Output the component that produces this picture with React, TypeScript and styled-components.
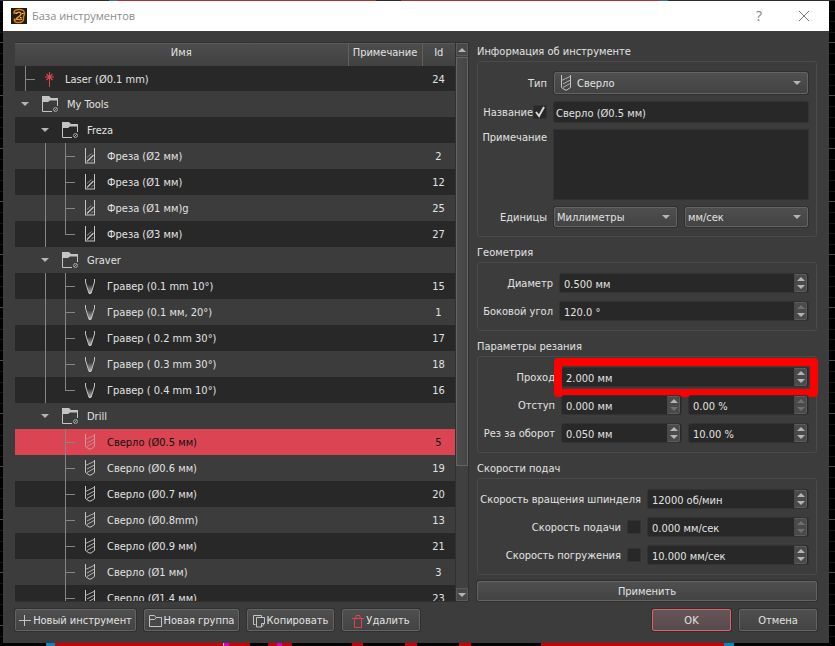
import React from "react";
import styled, { createGlobalStyle, css } from "styled-components";

const color = {
  panel: "#3c3c3c",
  dark: "#282828",
  edge: "#303030",
  text: "#e2e2e2",
  guide: "#858585",
  icon: "#c4c4c4",
  accent: "#db4453",
  rule: "#4a4a4a",
};

const GlobalStyle = createGlobalStyle`
  *, *::before, *::after { box-sizing: border-box; }
  body { margin: 0; background: #000; }
  body, button, input, select, textarea {
    font-family: "DejaVu Sans Condensed", "Noto Sans", sans-serif;
    font-size: 11px;
    line-height: 14px;
    color: ${color.text};
  }
  svg { display: block; flex: none; }
`;

/* ---------- workspace behind the dialog ---------- */

const Workspace = styled.div`
  display: flex;
  flex-direction: column;
  height: 100vh;
  background: repeating-linear-gradient(
      to bottom,
      #151515 0 1px, #000 1px 11px, #151515 11px 12px, #000 12px 21px,
      #151515 21px 22px, #000 22px 32px, #151515 32px 33px, #000 33px 42px,
      #484848 42px 43px, #000 43px 53px
    ) #000;
`;

const TopStrip = styled.div`
  flex: none;
  height: 1px;
  background: linear-gradient(
    to right,
    #2c2c2c 13%, #2f74a0 13% 14%, #a53439 14% 45%, #2c2c2c 45% 48%,
    #a53439 48% 79%, #2f74a0 79% 80%, #2c2c2c 80%
  );
`;

const BottomStrip = styled.div`
  flex: none;
  height: 3px;
  background: linear-gradient(
    to right,
    #000 46px, #0a84c8 46px 55px, #d00000 55px 223px, #d8b0d8 223px 224px,
    #d400d4 224px 229px, #d00000 229px 250px, #000 250px 268px, #d00000 268px 277px,
    #d400d4 277px 282px, #d00000 282px 292px, #000 292px 352px, #d00000 352px 363px,
    #000 363px 405px, #d00000 405px 417px, #000 417px 459px, #d00000 459px 471px,
    #000 471px 541px, #d00000 541px 724px, #0a84c8 724px 734px, #000 734px
  );
`;

const Dialog = styled.main`
  flex: 1;
  min-height: 0;
  margin: 0 6px 0 3px;
  display: flex;
  flex-direction: column;
  background: ${color.panel};
`;

const TitleBar = styled.header`
  flex: none;
  height: 30px;
  padding: 0 17px 0 8px;
  display: flex;
  align-items: center;
  gap: 5px;
  background: #fff;
`;

const Title = styled.h1`
  flex: 1;
  margin: 0;
  font: 400 11px/16px "Open Sans", sans-serif;
  color: #8c8c8c;
`;

const CaptionButton = styled.button`
  width: 16px;
  height: 20px;
  margin-left: 24px;
  padding: 0;
  border: 0;
  background: none;
  display: flex;
  align-items: center;
  justify-content: center;
  font: 400 14px/16px "Open Sans", sans-serif;
  color: #808080;
`;

const Content = styled.div`
  flex: 1;
  min-height: 0;
  padding: 11px 12px 12px;
  display: flex;
  flex-direction: column;
  gap: 7px;
`;

const Panes = styled.div`
  flex: 1;
  min-height: 0;
  display: grid;
  grid-template-columns: minmax(0, 462fr) minmax(0, 340fr);
  grid-template-rows: minmax(0, 1fr);
`;

/* ---------- tool tree ---------- */

const TreePane = styled.section`
  min-height: 0;
  display: flex;
  border: solid ${color.edge};
  border-width: 1px 0;
  margin-right: 8px;
  overflow: hidden;
`;

const TreeViewport = styled.div`
  flex: 1;
  min-width: 0;
  overflow: hidden;
`;

const TreeTable = styled.table`
  width: 100%;
  table-layout: fixed;
  border-collapse: collapse;
  border-spacing: 0;
`;

const HeadCell = styled.th<{ $width?: number }>`
  width: ${(p) => (p.$width ? p.$width + "px" : "auto")};
  height: 23px;
  padding: 0 0 4px;
  font-weight: 400;
  text-align: center;
  white-space: nowrap;
  background: linear-gradient(#4d4d4d, #414141);
  box-shadow: inset 0 1px #5a5a5a;
  & + & { border-left: 1px solid #606060; }
`;

const TreeRow = styled.tr<{ $selected?: boolean }>`
  background: ${color.panel};
  color: ${color.text};
  &:nth-child(odd) { background: ${color.dark}; }
  ${(p) =>
    p.$selected &&
    css`
      &&:nth-child(n) { background: ${color.accent}; color: #111; }
      svg { opacity: 0.65; }
    `}
`;

const Cell = styled.td`
  padding: 0;
  text-align: center;
`;

const IdCell = styled(Cell)`
  padding-top: 2px;
`;

const NameLine = styled.div<{ $short?: boolean }>`
  height: ${(p) => (p.$short ? 25 : 26)}px;
  display: flex;
  align-items: center;
  white-space: nowrap;
`;

const NameText = styled.span`
  padding-top: 2px;
`;

type GuideKind = "none" | "through" | "tee" | "corner";

const vertical = `linear-gradient(${color.guide}, ${color.guide}) 10px 0 / 1px`;
const branch = `linear-gradient(${color.guide}, ${color.guide}) 10px 13px / 10px 1px no-repeat`;

const guideBackground: Record<GuideKind, string> = {
  none: "none",
  through: `${vertical} 100% no-repeat`,
  tee: `${vertical} 100% no-repeat, ${branch}`,
  corner: `${vertical} 13px no-repeat, ${branch}`,
};

const Guide = styled.span<{ $kind: GuideKind }>`
  flex: none;
  align-self: stretch;
  width: 20px;
  display: flex;
  align-items: center;
  justify-content: center;
  background: ${(p) => guideBackground[p.$kind]};
`;

const IconSlot = styled.span<{ $root?: boolean }>`
  flex: none;
  width: ${(p) => (p.$root ? 28 : 30)}px;
  margin-right: 2px;
  display: flex;
  justify-content: center;
`;

const Expander = styled.button`
  padding: 2px;
  border: 0;
  background: none;
`;

const ScrollBar = styled.div`
  flex: none;
  width: 14px;
  display: flex;
  flex-direction: column;
  border: solid ${color.edge};
  border-width: 0 1px;
  background: #333;
`;

const ScrollButton = styled.button`
  height: 13px;
  padding: 0;
  display: flex;
  align-items: center;
  justify-content: center;
  border: 1px solid #5a5a5a;
  background: #484848;
`;

const ScrollTrack = styled.div`
  flex: 1;
  display: flex;
  flex-direction: column;
  padding-top: 1px;
  background: #404040;
`;

const ScrollThumb = styled.div`
  flex: 77;
  border: 1px solid #646464;
  background: linear-gradient(to right, #4c4c4c, #454545);
`;

const ScrollRest = styled.div`
  flex: 23;
`;

/* ---------- tool form ---------- */

const FormPane = styled.form`
  display: flex;
  flex-direction: column;
  gap: 6px;
`;

const Group = styled.fieldset`
  margin: 0;
  padding: 0;
  border: 0;
  min-width: 0;
`;

const GroupTitle = styled.legend`
  height: 19px;
  padding: 3px 0 0;
`;

const GroupBox = styled.div<{ $label: number; $gap?: number; $padding?: string; $rowGap?: number }>`
  display: grid;
  grid-template-columns: ${(p) => p.$label}px minmax(0, 1fr);
  gap: ${(p) => p.$rowGap ?? 8}px ${(p) => p.$gap ?? 6}px;
  padding: ${(p) => p.$padding ?? "10px 7px 9px"};
  border: 1px solid ${color.rule};
  border-radius: 3px;
`;

const Caption = styled.div<{ $top?: boolean }>`
  display: flex;
  align-items: center;
  align-self: ${(p) => (p.$top ? "start" : "center")};
  justify-content: flex-end;
  gap: 6px;
  white-space: nowrap;

  label { padding-top: 2px; }
`;

const TightCaption = styled(Caption)`
  gap: 0;
`;

const FieldPair = styled.div<{ $gap: number }>`
  display: grid;
  grid-template-columns: repeat(2, minmax(0, 1fr));
  gap: ${(p) => p.$gap}px;
`;

const inputLook = css`
  width: 100%;
  border: 1px solid #323232;
  border-radius: 3px;
  background: ${color.dark};
  outline: 0;
`;

const TextInput = styled.input`
  ${inputLook}
  height: 22px;
  padding: 2px 2px 0;
`;

const NoteInput = styled.textarea`
  ${inputLook}
  display: block;
  height: 71px;
  border-radius: 0;
  resize: none;
`;

const SpinFrame = styled.div`
  ${inputLook}
  position: relative;
  height: 20px;
  padding-right: 1px;
  display: flex;
  align-items: center;
`;

const SpinInput = styled.input`
  flex: 1;
  min-width: 0;
  height: 18px;
  padding: 2px 0 0 4px;
  border: 0;
  outline: 0;
  background: none;
`;

const SpinButtons = styled.div`
  flex: none;
  width: 13px;
  height: 18px;
  display: flex;
  flex-direction: column;
  border: 1px solid #5c5c5c;
  border-left-color: #484848;
  border-radius: 0 2px 2px 0;
  background: #4a4a4a;
`;

const SpinButton = styled.button`
  flex: 1;
  min-height: 0;
  padding: 0;
  border: 0;
  display: flex;
  align-items: center;
  justify-content: center;
  background: none;
  &:disabled { opacity: 0.35; }
`;

const Highlight = styled.div`
  position: absolute;
  inset: -10px -10px -11px -8px;
  border: 8px solid #f00;
  border-radius: 4px;
  pointer-events: none;
`;

const raised = css`
  border: 1px solid #646464;
  border-radius: 2px;
  background: linear-gradient(#4f4f4f, #434343);
  box-shadow: 0 0 0 1px ${color.edge};
`;

const SelectFrame = styled.div<{ $tall?: boolean }>`
  ${raised}
  position: relative;
  margin: 1px;
  height: ${(p) => (p.$tall ? 22 : 20)}px;
`;

const Select = styled.select<{ $icon?: boolean }>`
  appearance: none;
  display: block;
  width: 100%;
  height: 100%;
  padding: 2px 20px 0 ${(p) => (p.$icon ? 22 : 2)}px;
  border: 0;
  outline: 0;
  background: none;
`;

const SelectIcon = styled.span<{ $side: "left" | "right" }>`
  position: absolute;
  ${(p) => p.$side}: 6px;
  top: 0;
  bottom: 0;
  display: flex;
  align-items: center;
  pointer-events: none;
`;

const CheckBox = styled.input`
  appearance: none;
  flex: none;
  width: 14px;
  height: 14px;
  margin: 0;
  border: 1px solid #333;
  background: ${color.dark};
`;

const CheckFrame = styled.span`
  position: relative;
  display: flex;
`;

const CheckMark = styled.svg`
  position: absolute;
  inset: 1px;
  pointer-events: none;
`;

const Button = styled.button<{ $primary?: boolean; $width?: number }>`
  ${raised}
  height: 22px;
  width: ${(p) => (p.$width ? p.$width + "px" : "auto")};
  padding: 2px 5px 0;
  display: flex;
  align-items: center;
  justify-content: center;
  gap: 2px;
  white-space: nowrap;
  ${(p) =>
    p.$primary &&
    css`
      border-color: #e0606c;
      background: linear-gradient(#665558, #574a4c);
    `}
`;

const ApplyButton = styled(Button)`
  height: 20px;
`;

const Footer = styled.footer`
  flex: none;
  display: flex;
  gap: 8px;
`;

const Spacer = styled.div`
  flex: 1;
`;

/* ---------- drawings ---------- */

const Arrow = ({ up = false }: { up?: boolean }) => (
  <svg width="8" height="4" viewBox="0 0 8 4" aria-hidden="true">
    <path d={up ? "M0 4h8L4 0z" : "M0 0h8L4 4z"} fill="#b4b4b4" />
  </svg>
);

const AppIcon = () => (
  <svg width="16" height="16" viewBox="0 0 16 16" fill="none" aria-hidden="true">
    <rect width="16" height="16" fill="#211c0e" />
    <path d="M3.500 6C2 3.500 4 1.500 8 1.500S13.500 3 13.500 5.500 12 8 12.500 10.500 11 14.500 7.500 14.500 2.500 13 3.500 10.500" stroke="#d8821c" strokeWidth="1.500" />
    <path d="M5.500 6C5.500 4 10 3.500 10 6S6 8.500 5 11.500c2-.8 4 .8 6-.5" stroke="#e8952a" strokeWidth="1.500" />
    <path d="M4 5h1.500M11 5.500h1.500M9 9.500h1.500" stroke="#f3dca0" />
  </svg>
);

const CloseIcon = () => (
  <svg width="12" height="12" viewBox="0 0 12 12" aria-hidden="true">
    <path d="M1 1l10 10M11 1L1 11" stroke="#777" />
  </svg>
);

const LaserIcon = () => (
  <svg width="16" height="16" viewBox="0 0 16 16" aria-hidden="true">
    <path d="M8.500 1v15" stroke={color.accent} />
    <path d="M4 6h9M5.500 3l6 6M11.500 3l-6 6" stroke={color.accent} strokeWidth="1.200" fill="none" />
  </svg>
);

const FolderIcon = () => (
  <svg width="17" height="16" viewBox="0 0 17 16" fill="none" aria-hidden="true">
    <path d="M0 0h7l2 2h7v2.500H8L6 6H0z" fill={color.icon} />
    <path d="M.5 5v10.500H10M15.500 4v6" stroke={color.icon} />
    <circle cx="13.500" cy="13.500" r="2" stroke="#a0a0a0" />
    <path d="M12 15l3-3" stroke="#a0a0a0" />
  </svg>
);

const MillIcon = () => (
  <svg width="11" height="16" viewBox="0 0 11 16" fill="none" aria-hidden="true">
    <path d="M.5 0v15M9.500 0v15M0 15h10" stroke={color.icon} />
    <path d="M2 9.500L6.500 5.500M6 13.500l2.500-2.500" stroke="#909090" />
    <path d="M2 13.500L8.500 7" stroke={color.icon} strokeWidth="1.200" />
  </svg>
);

const GraverIcon = () => (
  <svg width="11" height="16" viewBox="0 0 11 16" fill="none" aria-hidden="true">
    <defs>
      <linearGradient id="graver" x1="0" y1="0" x2="0" y2="1">
        <stop offset="0.3" stopColor="#c4c4c4" stopOpacity="0" />
        <stop offset="1" stopColor="#c4c4c4" stopOpacity="0.9" />
      </linearGradient>
    </defs>
    <path d="M1 3l3 12h2.500L9 3z" fill="url(#graver)" />
    <path d="M.5 1v3L4 15.500h2L9.500 4V1" stroke={color.icon} />
  </svg>
);

const DrillIcon = () => (
  <svg width="11" height="16" viewBox="0 0 11 16" fill="none" aria-hidden="true">
    <path d="M.5 0v12.500L4 15h2l3.500-2.500V0" stroke={color.icon} />
    <path d="M.5 5.500L9 1.500M2 9L9.500 5M2 12.500l7-4" stroke="#b0b0b0" />
  </svg>
);

const PlusIcon = () => (
  <svg width="12" height="12" viewBox="0 0 12 12" aria-hidden="true">
    <path d="M0 5.500h12M5.500 0v11" stroke={color.icon} />
  </svg>
);

const NewFolderIcon = () => (
  <svg width="13" height="12" viewBox="0 0 13 12" fill="none" aria-hidden="true">
    <path d="M.5 11.500V.5h5l1.500 2h5.500v9zM.5 4.500h5l2-2" stroke={color.icon} />
  </svg>
);

const CopyIcon = () => (
  <svg width="12" height="13" viewBox="0 0 12 13" fill="none" aria-hidden="true">
    <path d="M2.500 9.500h-2v-9h8v1.500" stroke={color.icon} />
    <path d="M3.500 2.500h8v6l-3 3.500h-5zM11.500 8.500h-3V12" stroke={color.icon} />
  </svg>
);

const TrashIcon = () => (
  <svg width="12" height="13" viewBox="0 0 12 13" fill="none" aria-hidden="true">
    <path d="M0 3.500h12M4 3V.5h4V3M2.500 3.500v9h7v-9" stroke={color.accent} />
  </svg>
);

/* ---------- data ---------- */

const icons = { laser: LaserIcon, folder: FolderIcon, mill: MillIcon, graver: GraverIcon, drill: DrillIcon };

type Item = {
  name: string;
  id?: number;
  icon: keyof typeof icons;
  guides: GuideKind[];
};

const leaves = (icon: Item["icon"], trunk: GuideKind, closed: boolean, list: [string, number][]): Item[] =>
  list.map(([name, id], i) => ({
    name,
    id,
    icon,
    guides: ["none", trunk, closed && i === list.length - 1 ? "corner" : "tee"],
  }));

const items: Item[] = [
  { name: "Laser (Ø0.1 mm)", id: 24, icon: "laser", guides: ["tee"] },
  { name: "My Tools", icon: "folder", guides: [] },
  { name: "Freza", icon: "folder", guides: ["none"] },
  ...leaves("mill", "through", true, [
    ["Фреза (Ø2 мм)", 2],
    ["Фреза (Ø1 мм)", 12],
    ["Фреза (Ø1 мм)g", 25],
    ["Фреза (Ø3 мм)", 27],
  ]),
  { name: "Graver", icon: "folder", guides: ["none"] },
  ...leaves("graver", "through", true, [
    ["Гравер (0.1 mm 10°)", 15],
    ["Гравер (0.1 мм, 20°)", 1],
    ["Гравер ( 0.2 mm 30°)", 17],
    ["Гравер ( 0.3 mm 30°)", 18],
    ["Гравер ( 0.4 mm 10°)", 16],
  ]),
  { name: "Drill", icon: "folder", guides: ["none"] },
  ...leaves("drill", "none", false, [
    ["Сверло (Ø0.5 мм)", 5],
    ["Сверло (Ø0.6 мм)", 19],
    ["Сверло (Ø0.7 мм)", 20],
    ["Сверло (Ø0.8mm)", 13],
    ["Сверло (Ø0.9 мм)", 21],
    ["Сверло (Ø1 мм)", 3],
    ["Сверло (Ø1.4 мм)", 23],
  ]),
];

/* ---------- composed controls ---------- */

type SpinProps = { id: string; value: string; label?: string; upOff?: boolean; downOff?: boolean; marked?: boolean };

const Spin = ({ id, value, label, upOff, downOff, marked }: SpinProps) => (
  <SpinFrame>
    <SpinInput id={id} defaultValue={value} aria-label={label} />
    <SpinButtons>
      <SpinButton type="button" aria-label="Увеличить" disabled={upOff}><Arrow up /></SpinButton>
      <SpinButton type="button" aria-label="Уменьшить" disabled={downOff}><Arrow /></SpinButton>
    </SpinButtons>
    {marked && <Highlight />}
  </SpinFrame>
);

const Tree = () => (
  <TreePane>
    <TreeViewport>
      <TreeTable>
        <thead>
          <tr>
            <HeadCell scope="col">Имя</HeadCell>
            <HeadCell scope="col" $width={74}>Примечание</HeadCell>
            <HeadCell scope="col" $width={33}>Id</HeadCell>
          </tr>
        </thead>
        <tbody>
          {items.map((item, index) => {
            const Icon = icons[item.icon];
            return (
              <TreeRow key={item.name} $selected={item.id === 5}>
                <Cell>
                  <NameLine $short={index === 0}>
                    {item.guides.map((kind, i) => <Guide key={i} $kind={kind} />)}
                    {item.icon === "folder" && (
                      <Guide $kind="none">
                        <Expander type="button" aria-label={"Свернуть " + item.name}><Arrow /></Expander>
                      </Guide>
                    )}
                    <IconSlot $root={item.icon === "laser"}><Icon /></IconSlot>
                    <NameText>{item.name}</NameText>
                  </NameLine>
                </Cell>
                <Cell />
                <IdCell>{item.id}</IdCell>
              </TreeRow>
            );
          })}
        </tbody>
      </TreeTable>
    </TreeViewport>
    <ScrollBar>
      <ScrollButton type="button" aria-label="Вверх"><Arrow up /></ScrollButton>
      <ScrollTrack>
        <ScrollThumb />
        <ScrollRest />
      </ScrollTrack>
      <ScrollButton type="button" aria-label="Вниз"><Arrow /></ScrollButton>
    </ScrollBar>
  </TreePane>
);

const ToolForm = () => (
  <FormPane onSubmit={(e) => e.preventDefault()}>
    <Group>
      <GroupTitle>Информация об инструменте</GroupTitle>
      <GroupBox $label={62} $padding="9px 7px 8px" $rowGap={6}>
        <Caption><label htmlFor="type">Тип</label></Caption>
        <SelectFrame $tall>
          <Select id="type" $icon><option>Сверло</option></Select>
          <SelectIcon $side="left"><DrillIcon /></SelectIcon>
          <SelectIcon $side="right"><Arrow /></SelectIcon>
        </SelectFrame>
        <TightCaption>
          <label htmlFor="name">Название</label>
          <CheckFrame>
            <CheckBox type="checkbox" defaultChecked aria-label="Название автоматически" />
            <CheckMark width="12" height="12" viewBox="0 0 12 12">
              <path d="M2 6l3 4L10 1" stroke="#d8d8d8" strokeWidth="2" fill="none" />
            </CheckMark>
          </CheckFrame>
        </TightCaption>
        <TextInput id="name" defaultValue="Сверло (Ø0.5 мм)" />
        <Caption $top><label htmlFor="note">Примечание</label></Caption>
        <NoteInput id="note" />
        <Caption><label htmlFor="units">Единицы</label></Caption>
        <FieldPair $gap={6}>
          <SelectFrame>
            <Select id="units"><option>Миллиметры</option></Select>
            <SelectIcon $side="right"><Arrow /></SelectIcon>
          </SelectFrame>
          <SelectFrame>
            <Select aria-label="Единицы скорости"><option>мм/сек</option></Select>
            <SelectIcon $side="right"><Arrow /></SelectIcon>
          </SelectFrame>
        </FieldPair>
      </GroupBox>
    </Group>

    <Group>
      <GroupTitle>Геометрия</GroupTitle>
      <GroupBox $label={68}>
        <Caption><label htmlFor="diameter">Диаметр</label></Caption>
        <Spin id="diameter" value="0.500 мм" />
        <Caption><label htmlFor="angle">Боковой угол</label></Caption>
        <Spin id="angle" value="120.0 °" upOff />
      </GroupBox>
    </Group>

    <Group>
      <GroupTitle>Параметры резания</GroupTitle>
      <GroupBox $label={70}>
        <Caption><label htmlFor="pass">Проход</label></Caption>
        <Spin id="pass" value="2.000 мм" marked />
        <Caption><label htmlFor="stepover">Отступ</label></Caption>
        <FieldPair $gap={6}>
          <Spin id="stepover" value="0.000 мм" downOff />
          <Spin id="stepover-percent" label="Отступ, %" value="0.00 %" upOff downOff />
        </FieldPair>
        <Caption><label htmlFor="cut">Рез за оборот</label></Caption>
        <FieldPair $gap={6}>
          <Spin id="cut" value="0.050 мм" />
          <Spin id="cut-percent" label="Рез за оборот, %" value="10.00 %" />
        </FieldPair>
      </GroupBox>
    </Group>

    <Group>
      <GroupTitle>Скорости подач</GroupTitle>
      <GroupBox $label={156}>
        <Caption><label htmlFor="spindle">Скорость вращения шпинделя</label></Caption>
        <Spin id="spindle" value="12000 об/мин" />
        <Caption>
          <label htmlFor="feed">Скорость подачи</label>
          <CheckBox type="checkbox" aria-label="Скорость подачи автоматически" />
        </Caption>
        <Spin id="feed" value="0.000 мм/сек" upOff downOff />
        <Caption>
          <label htmlFor="plunge">Скорость погружения</label>
          <CheckBox type="checkbox" aria-label="Скорость погружения автоматически" />
        </Caption>
        <Spin id="plunge" value="10.000 мм/сек" />
      </GroupBox>
    </Group>

    <ApplyButton type="submit">Применить</ApplyButton>
  </FormPane>
);

export default function App() {
  return (
    <Workspace>
      <GlobalStyle />
      <TopStrip />
      <Dialog>
        <TitleBar>
          <AppIcon />
          <Title>База инструментов</Title>
          <CaptionButton type="button" aria-label="Справка">?</CaptionButton>
          <CaptionButton type="button" aria-label="Закрыть"><CloseIcon /></CaptionButton>
        </TitleBar>
        <Content>
          <Panes>
            <Tree />
            <ToolForm />
          </Panes>
          <Footer>
            <Button type="button" $width={121}><PlusIcon />Новый инструмент</Button>
            <Button type="button" $width={95}><NewFolderIcon />Новая группа</Button>
            <Button type="button" $width={87}><CopyIcon />Копировать</Button>
            <Button type="button" $width={78}><TrashIcon />Удалить</Button>
            <Spacer />
            <Button type="button" $primary $width={79}>OK</Button>
            <Button type="button" $width={78}>Отмена</Button>
          </Footer>
        </Content>
      </Dialog>
      <BottomStrip />
    </Workspace>
  );
}
